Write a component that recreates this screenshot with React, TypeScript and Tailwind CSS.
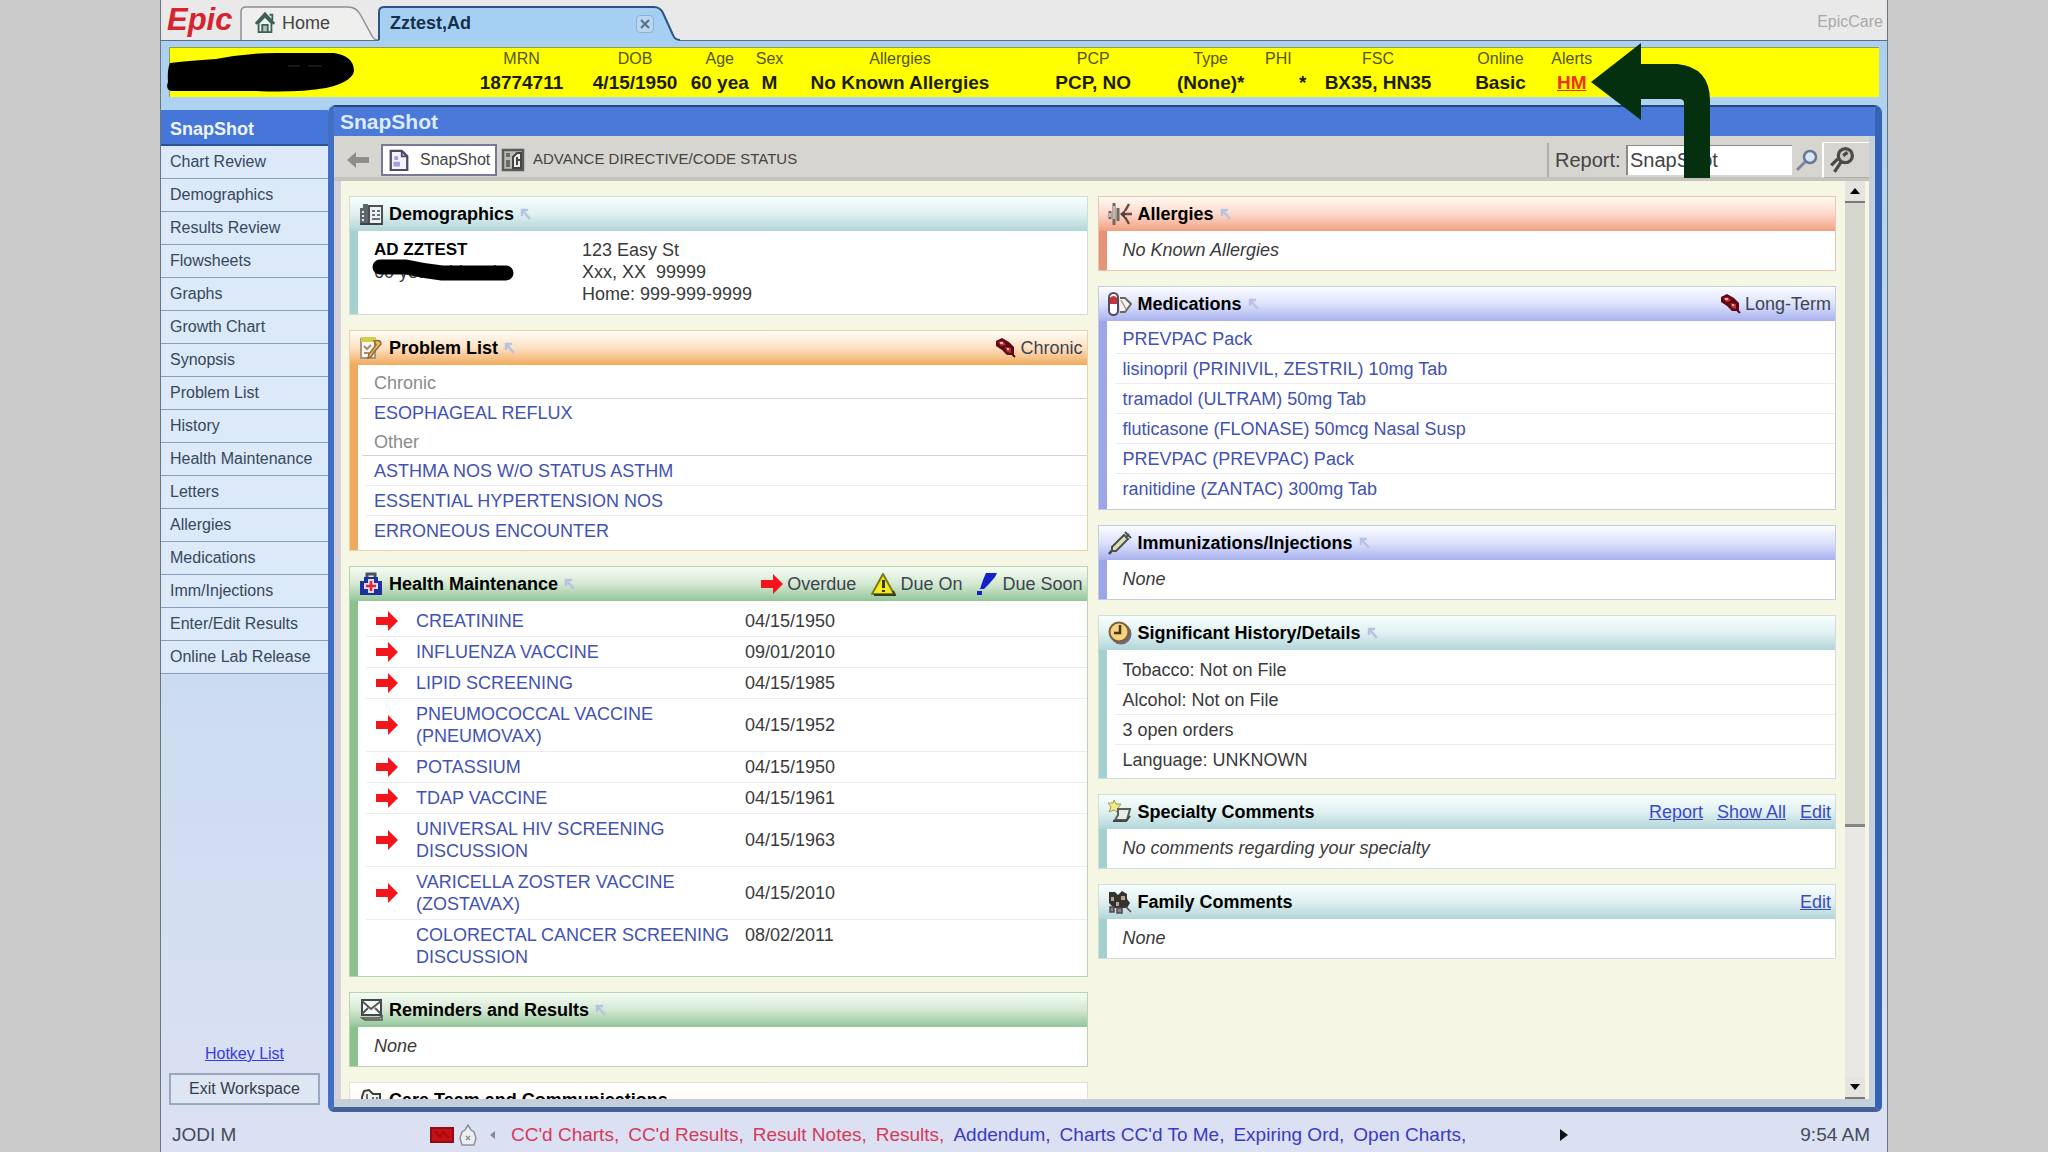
import type { ReactNode } from "react";

const activities = [
  "Chart Review", "Demographics", "Results Review", "Flowsheets", "Graphs", "Growth Chart",
  "Synopsis", "Problem List", "History", "Health Maintenance", "Letters", "Allergies",
  "Medications", "Imm/Injections", "Enter/Edit Results", "Online Lab Release",
];

const patientFields = [
  { label: "MRN", value: "18774711" },
  { label: "DOB", value: "4/15/1950" },
  { label: "Age", value: "60 yea" },
  { label: "Sex", value: "M" },
  { label: "Allergies", value: "No Known Allergies" },
  { label: "PCP", value: "PCP, NO" },
  { label: "Type", value: "(None)*" },
  { label: "PHI", value: "*", right: true },
  { label: "FSC", value: "BX35, HN35" },
  { label: "Online", value: "Basic" },
];

const maintenance = [
  { name: "CREATININE", date: "04/15/1950", overdue: true },
  { name: "INFLUENZA VACCINE", date: "09/01/2010", overdue: true },
  { name: "LIPID SCREENING", date: "04/15/1985", overdue: true },
  { name: "PNEUMOCOCCAL VACCINE (PNEUMOVAX)", date: "04/15/1952", overdue: true },
  { name: "POTASSIUM", date: "04/15/1950", overdue: true },
  { name: "TDAP VACCINE", date: "04/15/1961", overdue: true },
  { name: "UNIVERSAL HIV SCREENING DISCUSSION", date: "04/15/1963", overdue: true },
  { name: "VARICELLA ZOSTER VACCINE (ZOSTAVAX)", date: "04/15/2010", overdue: true },
  { name: "COLORECTAL CANCER SCREENING DISCUSSION", date: "08/02/2011", overdue: false },
];

const medications = [
  "PREVPAC Pack",
  "lisinopril (PRINIVIL, ZESTRIL) 10mg Tab",
  "tramadol (ULTRAM) 50mg Tab",
  "fluticasone (FLONASE) 50mcg Nasal Susp",
  "PREVPAC (PREVPAC) Pack",
  "ranitidine (ZANTAC) 300mg Tab",
];

const history = ["Tobacco: Not on File", "Alcohol: Not on File", "3 open orders", "Language: UNKNOWN"];

const inbox = [
  { name: "CC'd Charts,", urgent: true },
  { name: "CC'd Results,", urgent: true },
  { name: "Result Notes,", urgent: true },
  { name: "Results,", urgent: true },
  { name: "Addendum,", urgent: false },
  { name: "Charts CC'd To Me,", urgent: false },
  { name: "Expiring Ord,", urgent: false },
  { name: "Open Charts,", urgent: false },
];

const tones = {
  teal: { head: "from-[#f8fffe] via-[#e0f0f0] to-[#b2d5da]", side: "border-[#a5d0d0]", edge: "border-[#cfdedd]" },
  orange: { head: "from-[#fffdf8] via-[#fce0c2] to-[#f0aa5a]", side: "border-[#ecab5e]", edge: "border-[#ecd2a6]" },
  green: { head: "from-[#f6fdf4] via-[#d4e8d2] to-[#92c699]", side: "border-[#8cc08d]", edge: "border-[#b7d2b4]" },
  red: { head: "from-[#fffaf2] via-[#fcd8cc] to-[#f0a080]", side: "border-[#e69478]", edge: "border-[#eac5b2]" },
  blue: { head: "from-[#fbfdff] via-[#dce2fc] to-[#a9b1ee]", side: "border-[#9ba6e8]", edge: "border-[#c5cce2]" },
  plain: { head: "from-white via-[#fdfbf6] to-[#f6dfcf]", side: "border-[#eac5b2]", edge: "border-[#e9ddcf]" },
};

/* ---------- icons ---------- */

function Icon({ children, className = "w-6 h-6" }: { children: ReactNode; className?: string }) {
  return <svg viewBox="0 0 24 24" fill="none" aria-hidden="true" className={`${className} shrink-0`}>{children}</svg>;
}

const RedArrow = () => (
  <svg viewBox="0 0 22 20" aria-hidden="true" className="w-[22px] h-5 shrink-0">
    <path d="M0 6h12V0l10 10-10 10v-6H0z" fill="#f3141c" />
  </svg>
);

const JumpArrow = () => (
  <svg viewBox="0 0 12 12" fill="none" stroke="#b7c3e2" strokeWidth="2.5" aria-hidden="true" className="w-3 h-3 shrink-0">
    <path d="M2 8V2h6M2 2l8 9" />
  </svg>
);

const RedTag = () => (
  <svg viewBox="0 0 20 20" aria-hidden="true" className="w-5 h-5 shrink-0">
    <path d="M0 3l6-3 7 4 5 5v8h-7l-5-5-6-4z" fill="#5d0a14" />
    <path d="M2 4l5-1 3 4-5 1zM9 9l6 1v5l-4-1z" fill="#c2303c" />
    <path d="M4 4h3v2H4zM11 10h2v2h-2z" fill="#f3b3b0" />
    <path d="M16 16l3 3" stroke="#5d0a14" strokeWidth="2" />
  </svg>
);

const WarnIcon = () => (
  <svg viewBox="0 0 26 24" aria-hidden="true" className="w-[26px] h-6 shrink-0">
    <path d="M13 2l11 20H2z" fill="#f4ec1c" stroke="#7d7a1a" strokeWidth="2" strokeLinejoin="round" />
    <path d="M4 23h21l-2-4" fill="none" stroke="#3d3c14" strokeWidth="2" />
    <path d="M12 8h3v8h-3zM12 18h3v2h-3z" fill="#3a3908" />
  </svg>
);

const SoonIcon = () => (
  <svg viewBox="0 0 22 24" aria-hidden="true" className="w-[22px] h-6 shrink-0">
    <path d="M10 1h11l-2 4-6 7-5 5H4l3-9z" fill="#1420c8" />
    <path d="M1 19h5v4H1z" fill="#1420c8" />
  </svg>
);

const HomeIcon = () => (
  <Icon className="w-[22px] h-6">
    <path d="M2 13L12 2l10 11" stroke="#3f5f58" strokeWidth="3" />
    <path d="M5 12v10h14V12L12 5z" fill="#eef3ee" stroke="#3f5f58" strokeWidth="2" />
    <path d="M17 3h3v6" stroke="#3f5f58" strokeWidth="2" />
    <path d="M9 14h6v8H9z" fill="#a9c6bc" stroke="#3f5f58" strokeWidth="2" />
  </Icon>
);

const DemographicsIcon = () => (
  <Icon>
    <path d="M1 6h8v16H1zM4 2h5v4H4z" fill="#5e666b" />
    <path d="M3 9h2v2H3zM3 13h2v2H3zM3 17h2v2H3zM9 7h2v14H9z" fill="#dfe7e8" />
    <path d="M10 4h13v18H10z" fill="#eef2f2" stroke="#4a5055" strokeWidth="2" />
    <path d="M13 9h3M18 9h3M13 13h3M18 13h3M13 17h8" stroke="#6d7479" strokeWidth="2" />
    <path d="M1 22h22" stroke="#3d4246" strokeWidth="2" />
  </Icon>
);

const ProblemIcon = () => (
  <Icon>
    <path d="M2 3h14v19H2z" fill="#fff8ec" stroke="#a39684" strokeWidth="2" />
    <path d="M2 1h15v5H2z" fill="#cfcc4e" />
    <path d="M5 10l3 3 4-4M5 17h5" stroke="#a58b78" strokeWidth="2" />
    <path d="M15 5q7-2 7 3l-7 8-3 5-3 1 1-4 7-9z" fill="#f2b860" stroke="#8d6a3c" strokeWidth="1.5" />
  </Icon>
);

const MaintenanceIcon = () => (
  <Icon>
    <path d="M8 5V2h8v3" stroke="#4a515e" strokeWidth="3" />
    <path d="M5 5h14v4h4v14H1V9h4z" fill="#1f2f9e" />
    <path d="M9 7h6v4h4v6h-4v4H9v-4H5v-6h4z" fill="#dcd9f3" />
    <path d="M12 9v10M7 14h10" stroke="#e3272f" strokeWidth="2.5" />
  </Icon>
);

const RemindersIcon = () => (
  <Icon>
    <path d="M3 2h19v15H3z" fill="#f6f8f4" stroke="#45484a" strokeWidth="2" />
    <path d="M3 3l9 8 10-8M3 16l6-6M22 16l-6-6" stroke="#55595b" strokeWidth="2" />
    <path d="M3 20h17l3-2v4H6z" fill="#c9b98a" stroke="#55595b" strokeWidth="1.5" />
  </Icon>
);

const CareTeamIcon = () => (
  <Icon>
    <path d="M5 3l5-1 4 4h7v14H3V9z" fill="#f3f3ee" stroke="#3c3f41" strokeWidth="2" />
    <path d="M8 6v10M14 9v9M18 9v9" stroke="#6a6d6f" strokeWidth="2" />
  </Icon>
);

const AllergiesIcon = () => (
  <Icon>
    <path d="M6 1v22M2 9v8M10 6v13" stroke="#6f6966" strokeWidth="3" />
    <path d="M6 4v13M2 11v4" stroke="#d8d4cf" strokeWidth="1.5" />
    <path d="M21 2l-4 7M24 12h-8M21 22l-4-7" stroke="#6b4a42" strokeWidth="2.5" />
    <path d="M12 12l5-4v9z" fill="#54403a" />
  </Icon>
);

const MedicationsIcon = () => (
  <Icon>
    <rect x="1" y="1" width="9" height="22" rx="4.5" fill="#fff" stroke="#4c4c5c" strokeWidth="2" />
    <path d="M2 12V6a4 4 0 0 1 7 0v6z" fill="#c8323f" />
    <path d="M12 6h5l6 6-6 8h-5" fill="#f7f4ee" stroke="#6a6763" strokeWidth="2" />
    <path d="M13 8l5 9" stroke="#9b9893" strokeWidth="1.5" />
  </Icon>
);

const SyringeIcon = () => (
  <Icon>
    <path d="M1 23l5-6" stroke="#3e4142" strokeWidth="2.5" />
    <path d="M4 16L16 4l4 4L8 20H4z" fill="#dfe0b0" stroke="#4e5153" strokeWidth="2" />
    <path d="M18 6l3-3M17 1l6 6" stroke="#4e5153" strokeWidth="2" />
  </Icon>
);

const ClockIcon = () => (
  <Icon>
    <circle cx="13" cy="13" r="10.5" fill="#6d6a80" />
    <circle cx="11" cy="11" r="9.5" fill="#f5d27c" stroke="#7c5f3c" strokeWidth="2" />
    <path d="M12 4v8H6" stroke="#4d3416" strokeWidth="2.5" />
  </Icon>
);

const SpecialtyIcon = () => (
  <Icon>
    <path d="M6 0l2 4 5 0-3 4 1 5-5-3-5 2 2-5-3-4 5 0z" fill="#f1ea8d" stroke="#a69c4c" />
    <path d="M10 9h12l-3 11H7l3-5z" fill="#e6ece4" stroke="#55605c" strokeWidth="2" />
    <path d="M5 21h13l4-5" stroke="#3f4845" strokeWidth="2" />
  </Icon>
);

const FamilyIcon = () => (
  <Icon>
    <path d="M1 2h6l3 3 4-4 5 3v5l3 4-3 5H6l-5-5z" fill="#35312f" />
    <path d="M3 7h3v4H3zM13 6h4v4h-4zM8 12h3v4H8z" fill="#b5a39c" />
    <path d="M2 17h4v5H2zM9 18h5v5H9zM17 16l6 6" fill="#8d7f86" stroke="#4f4850" strokeWidth="1.5" />
  </Icon>
);

/* ---------- building blocks ---------- */

type CardProps = { title: string; tone: keyof typeof tones; icon: ReactNode; jump?: boolean; extra?: ReactNode; children?: ReactNode };

function Card({ title, tone, icon, jump = true, extra, children }: CardProps) {
  const t = tones[tone];
  return (
    <section className={`border ${t.edge}`}>
      <header className={`flex items-center h-[34px] pl-[9px] pr-1 bg-linear-to-b ${t.head}`}>
        {icon}
        <h2 className="ml-[6px] mr-[6px] font-bold text-black whitespace-nowrap">{title}</h2>
        {jump && <JumpArrow />}
        <div className="ml-auto flex items-center gap-[14px] text-[#3d4450]">{extra}</div>
      </header>
      <div className={`border-l-8 bg-white ${t.side}`}>{children}</div>
    </section>
  );
}

const Legend = ({ icon, children }: { icon: ReactNode; children: string }) => (
  <span className="flex items-center gap-1 whitespace-nowrap">{icon}{children}</span>
);

const Note = ({ children }: { children: string }) => (
  <p className="h-[39px] leading-[38px] pl-4 italic">{children}</p>
);

const HeadLink = ({ children }: { children: string }) => (
  <a href="#" className="underline text-[#3b49c8]">{children}</a>
);

const rowLine = "ml-2 pl-2 h-[30px] leading-[30px] border-b border-[#ececf0] last:border-transparent";
const linkColor = "text-[#4252b4]";

function PatientTabs() {
  return (
    <div className="flex items-end h-[41px] pl-[6px] pr-1 border-b border-[#5c6c84] bg-[#e9e9e9]">
      <span className="self-start w-[73px] pt-[2px] text-[31px] leading-9 font-bold italic text-[#d5232f]">Epic</span>
      <button className="relative flex items-center w-[138px] h-[34px] pl-[14px] text-[18px] text-[#444]">
        <svg viewBox="0 0 138 34" fill="#efefee" stroke="#8b8f94" strokeWidth="1.5" className="absolute inset-0 w-full h-full">
          <path d="M1 34V6q0-5 5-5H108q8 0 12 7l12 22q2 4 6 4" />
        </svg>
        <span className="relative flex items-center gap-[6px]"><HomeIcon />Home</span>
      </button>
      <div className="relative -mb-px flex items-center w-[302px] h-[35px] pl-3 text-[18px] text-[#16304a]">
        <svg viewBox="0 0 302 35" fill="#a6d0f3" className="absolute inset-0 w-full h-full">
          <path d="M1 35V6q0-5 5-5H276q6 0 9 6l10 22q2 5 7 5v1z" />
          <path d="M1 34V6q0-5 5-5H276q6 0 9 6l10 22q2 5 7 5" fill="none" stroke="#2a5486" strokeWidth="2" />
        </svg>
        <span className="relative font-bold">Zztest,Ad</span>
        <button aria-label="Close tab" className="relative ml-auto mr-[26px] w-[18px] h-[18px] rounded-sm border border-[#8fb2d2] bg-[#b9d7f0] flex items-center justify-center">
          <svg viewBox="0 0 10 10" stroke="#5b6f83" strokeWidth="2" className="w-[10px] h-[10px]"><path d="M1 1l8 8M9 1L1 9" /></svg>
        </button>
      </div>
      <span className="ml-auto self-center pt-1 text-[16px] text-[#a9a9a9]">EpicCare</span>
    </div>
  );
}

function PatientHeader() {
  return (
    <div className="relative ml-2 mr-2 mt-[6px] mb-2 border-t border-l border-[#8f9f3a] bg-[#ffff00]">
      <dl className="grid grid-cols-[289fr_128fr_100fr_70fr_30fr_232fr_156fr_80fr_56fr_144fr_102fr_36fr_288fr] h-[49px] text-center whitespace-nowrap text-[#1c1c00]">
        {patientFields.map((f) => (
          <div key={f.label} className="first:col-start-2">
            <dt className="text-[16px] leading-[22px] text-[#55550c]">{f.label}</dt>
            <dd className={f.right ? "text-[19px] leading-[26px] font-bold text-right" : "text-[19px] leading-[26px] font-bold"}>{f.value}</dd>
          </div>
        ))}
        <div>
          <dt className="text-[16px] leading-[22px] text-[#55550c]">Alerts</dt>
          <dd className="text-[19px] leading-[26px] font-bold"><a href="#" className="underline text-[#f2300e]">HM</a></dd>
        </div>
      </dl>
      {/* marker stroke over the patient name */}
      <svg viewBox="0 0 190 42" aria-hidden="true" className="absolute -left-1 top-1 w-[190px] h-[42px]">
        <path d="M4 11Q20 9 50 7Q80 1 110 1H168Q188 4 188 19Q186 30 160 36Q130 41 90 39H6Q-1 38 2 30Q1 18 4 11z" fill="#000" />
        <path d="M122 14h12M142 14h14" stroke="#2e2e28" />
      </svg>
      {/* arrow pointing at the alert */}
      <svg viewBox="0 0 120 135" aria-hidden="true" className="absolute z-10 right-[168px] -top-[5px] w-[120px] h-[135px]">
        <path d="M0 39L50 0v21H86Q119 24 119 58V135H93V60Q93 56 88 56H50V77z" fill="#04300f" />
      </svg>
    </div>
  );
}

function Sidebar() {
  return (
    <nav className="flex flex-col w-[167px] shrink-0 pt-[5px] text-[16px] text-[#37485a]">
      <a href="#" className="h-9 leading-[38px] pl-[9px] text-[18px] font-bold text-[#eef5ff] bg-[#4677d8] border-b-2 border-[#2a5496]">SnapShot</a>
      {activities.map((name) => (
        <a key={name} href="#" className="h-[33px] leading-8 pl-[9px] whitespace-nowrap bg-[#dbe9f9] border-b border-[#8b9fb5]">{name}</a>
      ))}
      <div className="mt-auto flex flex-col px-2 gap-[7px] pb-[7px]">
        <a href="#" className="self-center underline text-[#3a3ae0]">Hotkey List</a>
        <button className="h-8 border-2 border-[#9aa8bf] bg-[#dfe6f3] text-[#333d4a]">Exit Workspace</button>
      </div>
    </nav>
  );
}

function Toolbar() {
  return (
    <div className="flex items-center h-[45px] pl-[13px] pt-[6px] bg-[#d6d5cf] border-b-4 border-[#c4c3be] text-[#444]">
      <button aria-label="Back">
        <svg viewBox="0 0 22 16" className="w-[22px] h-4"><path d="M0 8l9-8v5h13v6H9v5z" fill="#8e8e8a" /></svg>
      </button>
      <button className="ml-3 flex items-center w-[116px] h-8 pl-[5px] gap-[10px] border-2 border-[#77769b] bg-white text-[16px]">
        <Icon className="w-[22px] h-[22px]">
          <path d="M3 2h12l6 6v15H3z" fill="#f4f2fb" stroke="#4d4a66" strokeWidth="2.5" />
          <path d="M15 2v6h6" stroke="#4d4a66" strokeWidth="2" />
          <path d="M7 8h4v4H7zM6 14h7v5H6z" fill="#a79be0" />
        </Icon>
        SnapShot
      </button>
      <button className="ml-1 flex items-center gap-2 text-[15px] whitespace-nowrap">
        <Icon className="w-6 h-[26px]">
          <path d="M2 2h20v20H2z" fill="#b9b9b6" stroke="#5b5b5b" strokeWidth="2.5" />
          <path d="M5 5h4v4H5zM5 12h4v7H5z" fill="#6b6b6b" />
          <path d="M12 20V9l4-4h4v15z" fill="#ecece9" stroke="#444" strokeWidth="2" />
          <path d="M15 12h4M16 9v8" stroke="#444" strokeWidth="2" />
        </Icon>
        ADVANCE DIRECTIVE/CODE STATUS
      </button>
      <div className="ml-auto flex items-center h-[34px] pl-[6px] border-l-2 border-[#b0afaa] text-[20px]">
        <label htmlFor="report" className="w-[71px]">Report:</label>
        <input id="report" type="text" defaultValue="SnapShot" className="w-[166px] h-[30px] pl-[2px] bg-white border-l-2 border-t border-[#8c8c8a] outline-none" />
        <button aria-label="Search reports" className="w-[30px] h-[34px] flex items-center justify-center">
          <Icon>
            <circle cx="15" cy="9" r="6" fill="#dce6f5" stroke="#66769c" strokeWidth="2.5" />
            <path d="M10 14l-8 8" stroke="#7d879c" strokeWidth="3" />
          </Icon>
        </button>
        <button aria-label="Configure" className="w-[47px] h-9 pl-1 flex items-center border-l-2 border-t border-l-white border-t-white border-b border-b-[#b0afaa]">
          <Icon className="w-[26px] h-[26px]">
            <circle cx="16" cy="8" r="6.5" fill="#c9c8c4" stroke="#4c4a48" strokeWidth="3" />
            <path d="M14 8l4-3M12 14L6 23M9 11l-6 6" stroke="#4c4a48" strokeWidth="3" />
          </Icon>
        </button>
      </div>
    </div>
  );
}

function LeftColumn() {
  return (
    <div className="flex flex-col gap-[15px] min-w-0">
      <Card title="Demographics" tone="teal" icon={<DemographicsIcon />}>
        <div className="flex h-[83px] pt-2 pl-4 leading-[22px]">
          <div className="relative w-[208px]">
            <p className="text-[17px] font-bold text-black">AD ZZTEST</p>
            <p>60 year old male</p>
            <svg viewBox="0 0 146 24" aria-hidden="true" className="absolute -left-[2px] top-5 w-[146px] h-6">
              <path d="M8 8H34Q52 12 70 14L134 14" fill="none" stroke="#000" strokeWidth="15" strokeLinecap="round" strokeLinejoin="round" />
            </svg>
          </div>
          <address className="not-italic whitespace-pre">{"123 Easy St\nXxx, XX  99999\nHome: 999-999-9999"}</address>
        </div>
      </Card>

      <Card title="Problem List" tone="orange" icon={<ProblemIcon />} extra={<Legend icon={<RedTag />}>Chronic</Legend>}>
        <div className="pb-1">
          <h3 className="ml-1 pl-3 h-[34px] leading-9 border-b border-[#d4d4d6] text-[#8b8b8b]">Chronic</h3>
          <p className={`ml-1 pl-3 h-7 leading-7 ${linkColor}`}><a href="#">ESOPHAGEAL REFLUX</a></p>
          <h3 className="ml-1 pl-3 h-[29px] leading-[30px] border-b border-[#d4d4d6] text-[#8b8b8b]">Other</h3>
          <ul className={linkColor}>
            <li className={rowLine}><a href="#">ASTHMA NOS W/O STATUS ASTHM</a></li>
            <li className={rowLine}><a href="#">ESSENTIAL HYPERTENSION NOS</a></li>
            <li className={rowLine}><a href="#">ERRONEOUS ENCOUNTER</a></li>
          </ul>
        </div>
      </Card>

      <Card
        title="Health Maintenance"
        tone="green"
        icon={<MaintenanceIcon />}
        extra={<>
          <Legend icon={<RedArrow />}>Overdue</Legend>
          <Legend icon={<WarnIcon />}>Due On</Legend>
          <Legend icon={<SoonIcon />}>Due Soon</Legend>
        </>}
      >
        <div className="pt-[5px] pb-[3px] pl-2">
          <table className="w-full table-fixed text-left">
            <tbody>
              {maintenance.map((m) => (
                <tr key={m.name} className="border-b border-[#ececf0] last:border-transparent">
                  <td className="w-[50px] pl-[10px]">{m.overdue && <RedArrow />}</td>
                  <td className={`w-[329px] py-1 leading-[22px] ${linkColor}`}><a href="#">{m.name}</a></td>
                  <td className={m.overdue ? "py-1 leading-[22px]" : "py-1 leading-[22px] align-top"}>{m.date}</td>
                </tr>
              ))}
            </tbody>
          </table>
        </div>
      </Card>

      <Card title="Reminders and Results" tone="green" icon={<RemindersIcon />}>
        <Note>None</Note>
      </Card>

      <Card title="Care Team and Communications" tone="plain" icon={<CareTeamIcon />} jump={false} />
    </div>
  );
}

function RightColumn() {
  return (
    <div className="flex flex-col gap-[15px] min-w-0">
      <Card title="Allergies" tone="red" icon={<AllergiesIcon />}>
        <Note>No Known Allergies</Note>
      </Card>

      <Card title="Medications" tone="blue" icon={<MedicationsIcon />} extra={<Legend icon={<RedTag />}>Long-Term</Legend>}>
        <ul className={`pt-[3px] pb-[5px] ${linkColor}`}>
          {medications.map((m) => <li key={m} className={rowLine}><a href="#">{m}</a></li>)}
        </ul>
      </Card>

      <Card title="Immunizations/Injections" tone="blue" icon={<SyringeIcon />}>
        <Note>None</Note>
      </Card>

      <Card title="Significant History/Details" tone="teal" icon={<ClockIcon />}>
        <ul className="pt-[5px] pb-[3px]">
          {history.map((h) => <li key={h} className={rowLine}>{h}</li>)}
        </ul>
      </Card>

      <Card
        title="Specialty Comments"
        tone="teal"
        icon={<SpecialtyIcon />}
        jump={false}
        extra={<><HeadLink>Report</HeadLink><HeadLink>Show All</HeadLink><HeadLink>Edit</HeadLink></>}
      >
        <Note>No comments regarding your specialty</Note>
      </Card>

      <Card title="Family Comments" tone="teal" icon={<FamilyIcon />} jump={false} extra={<HeadLink>Edit</HeadLink>}>
        <Note>None</Note>
      </Card>
    </div>
  );
}

function ScrollRail() {
  const button = "flex items-center justify-center h-[22px] bg-[#e6e4de] border-b-2 border-[#7a7974]";
  return (
    <div className="flex flex-col w-5 mr-1 shrink-0 bg-[#e9e8e6]">
      <button aria-label="Scroll up" className={button}>
        <svg viewBox="0 0 10 6" className="w-[10px] h-[6px]"><path d="M5 0l5 6H0z" fill="#000" /></svg>
      </button>
      <div className="h-[68%] bg-[#d6d7cf] border-b-[3px] border-[#85847e]" />
      <button aria-label="Scroll down" className={`mt-auto ${button}`}>
        <svg viewBox="0 0 10 6" className="w-[10px] h-[6px]"><path d="M0 0h10L5 6z" fill="#000" /></svg>
      </button>
    </div>
  );
}

function StatusBar() {
  return (
    <footer className="flex items-center h-10 pl-[11px] pr-[17px] pt-[6px] text-[19px] text-[#444c5c] bg-[#dbe1f3] whitespace-nowrap">
      <span className="w-[258px]">JODI M</span>
      <svg viewBox="0 0 24 16" aria-hidden="true" className="w-6 h-4">
        <path d="M0 0h24v16H0z" fill="#8e0d12" />
        <path d="M2 2h20v12H2z" fill="#c90f16" />
        <path d="M5 4l5 6 3-5 6 6" fill="none" stroke="#a00c10" strokeWidth="2" />
      </svg>
      <svg viewBox="0 0 20 22" fill="none" stroke="#8e9196" strokeWidth="1.5" aria-hidden="true" className="ml-1 w-5 h-[22px]">
        <path d="M7 6l3-5 3 5 3 2 2 6-2 7H4l-2-7 2-6z" fill="#eceef0" />
        <path d="M8 12l4 4M12 12l-4 4" />
      </svg>
      <button aria-label="Previous" className="ml-[12px] w-[21px]">
        <svg viewBox="0 0 5 8" className="w-[5px] h-2"><path d="M5 0v8L0 4z" fill="#7f8ba0" /></svg>
      </button>
      <div className="flex gap-[9px]">
        {inbox.map((i) => (
          <a key={i.name} href="#" className={i.urgent ? "text-[#d63a5a]" : "text-[#3a3ac4]"}>{i.name}</a>
        ))}
      </div>
      <button aria-label="Next" className="ml-[94px]">
        <svg viewBox="0 0 8 12" className="w-2 h-3"><path d="M0 0l8 6-8 6z" fill="#111" /></svg>
      </button>
      <span className="ml-auto">9:54 AM</span>
    </footer>
  );
}

export default function App() {
  return (
    <div className="h-screen px-40 bg-[#cbcbcb] font-['Liberation_Sans',Arial,sans-serif] text-[18px] text-[#3a3a3a]">
      <div className="flex flex-col h-full border-x border-[#6b7480] overflow-hidden bg-linear-to-b from-[#a9d0f0] via-[#c9dbef] to-[#dbe1f3]">
        <PatientTabs />
        <PatientHeader />
        <div className="flex flex-1 min-h-0 pr-[5px]">
          <Sidebar />
          <main className="flex flex-col flex-1 min-w-0 rounded-t-lg rounded-b-md border-t-2 border-l-[6px] border-r-[7px] border-b-[5px] border-t-[#1f477c] border-l-[#416fc4] border-r-[#3563b4] border-b-[#475f99] bg-[#c9ccd6] overflow-hidden">
            <h1 className="h-[29px] leading-[30px] pl-[6px] text-[21px] font-bold text-[#dcebff] bg-[#4a79d9]">SnapShot</h1>
            <div className="flex flex-col flex-1 min-h-0 border-r-[6px] border-b-[8px] border-[#c5cfdc]">
              <Toolbar />
              <div className="flex flex-1 min-h-0 border-l-[7px] border-[#d5d0dc] bg-[#f6f6e5]">
                <div className="flex-1 min-w-0 grid grid-cols-2 gap-x-[10px] pl-2 pr-[9px] pt-[15px] overflow-hidden">
                  <LeftColumn />
                  <RightColumn />
                </div>
                <ScrollRail />
              </div>
            </div>
          </main>
        </div>
        <StatusBar />
      </div>
    </div>
  );
}
